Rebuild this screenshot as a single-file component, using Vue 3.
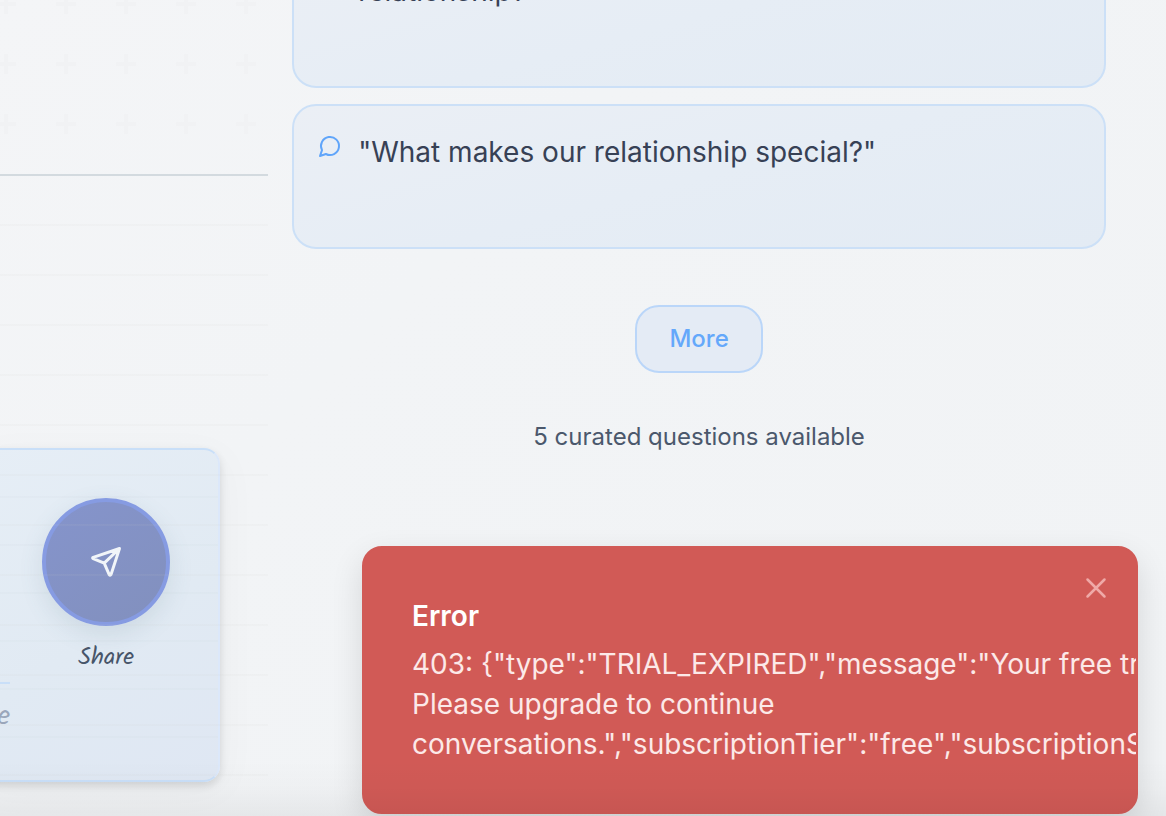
<script setup>
import { ref } from 'vue'

const questions = ['relationship?"', '"What makes our relationship special?"']
const toastOpen = ref(true)
</script>

<template>
  <div class="page">
    <section class="journal">
      <svg class="pattern" aria-hidden="true">
        <defs>
          <pattern id="plus" width="60" height="60" x="-24" y="-26" patternUnits="userSpaceOnUse">
            <path d="M28 20h4v8h8v4h-8v8h-4v-8h-8v-4h8z" fill="#f1f2f4" />
          </pattern>
        </defs>
        <rect width="100%" height="100%" fill="url(#plus)" />
      </svg>
      <div class="sheet">
        <form class="composer" @submit.prevent>
          <div class="hint">e</div>
          <div class="share">
            <button id="share" class="send" type="submit" aria-labelledby="share-label">
              <svg viewBox="0 0 32 32" fill="none" stroke="currentColor" stroke-width="3" stroke-linecap="round" stroke-linejoin="round" aria-hidden="true">
                <path d="M29.500 2.500 3.200 11.400Q2 12 3.200 12.700L14.200 17.200 19.200 28.600Q20.200 30 21 28.600ZM29 3 14.200 17.200" />
              </svg>
            </button>
            <label id="share-label" for="share">Share</label>
          </div>
        </form>
      </div>
    </section>

    <main class="prompts">
      <ul class="list">
        <li v-for="q in questions" :key="q" class="question">
          <svg class="bubble" viewBox="0 0 24 24" fill="none" stroke="currentColor" stroke-width="2" stroke-linecap="round" stroke-linejoin="round" aria-hidden="true">
            <path d="M7.900 20A9 9 0 1 0 4 16.100L2 22Z" />
          </svg>
          <p>{{ q }}</p>
        </li>
      </ul>
      <button class="more" type="button">More</button>
      <p class="count">5 curated questions available</p>
    </main>

    <div v-if="toastOpen" class="toast" role="alert">
      <h2>Error</h2>
      <p>403: {"type":"TRIAL_EXPIRED","message":"Your free trial<br />Please upgrade to continue<br />conversations.","subscriptionTier":"free","subscriptionStatus</p>
      <button class="close" type="button" aria-label="Close" @click="toastOpen = false">
        <svg viewBox="0 0 32 32" fill="none" stroke="currentColor" stroke-width="2.5" stroke-linecap="round" aria-hidden="true">
          <path d="M7.500 7.500 24.500 24.500M24.500 7.500 7.500 24.500" />
        </svg>
      </button>
    </div>
    <div class="shade"></div>
  </div>
</template>

<style>
body {
  margin: 0;
}
</style>

<style scoped>
* {
  box-sizing: border-box;
}
.page {
  position: relative;
  display: grid;
  grid-template-columns: 23% 1fr;
  height: 100vh;
  overflow: hidden;
  background: linear-gradient(135deg, #f4f5f7, #f2f4f6 35%, #f1f3f5);
  color: #374155;
  font-family: Inter, "Liberation Sans", sans-serif;
}
h2,
p,
ul {
  margin: 0;
  padding: 0;
}
button {
  font: inherit;
  cursor: pointer;
}
.journal {
  display: flex;
  flex-direction: column;
  min-width: 0;
}
.pattern {
  width: 100%;
  height: 174px;
}
.sheet {
  position: relative;
  display: flex;
  flex: 1;
  align-items: flex-end;
  padding: 0 48px 34px 0;
  border-top: 2px solid #d3dadf;
}
.sheet::after {
  content: "";
  position: absolute;
  inset: 0;
  background: repeating-linear-gradient(transparent 0 48px, rgba(200, 200, 195, 0.08) 48px 50px);
  pointer-events: none;
}
.composer {
  display: flex;
  flex: 1;
  align-items: flex-end;
  gap: 32px;
  min-height: 334px;
  margin-left: -24px;
  padding: 48px;
  padding-left: 0;
  border: 2px solid #c9dff8;
  border-right-color: #dce8fa;
  border-radius: 16px;
  background:
    repeating-linear-gradient(transparent 0 46px, rgba(190, 200, 205, 0.08) 46px 48px),
    linear-gradient(150deg, #e6eef6, #e1eaf3 55%, #dfe7f3);
  box-shadow: 0 4px 8px rgba(0, 0, 0, 0.12), 4px 8px 40px rgba(0, 0, 0, 0.03);
}
.hint {
  flex: 1;
  padding-top: 18px;
  border-top: 2px solid #c9dff8;
  color: #9aa6ba;
  font-size: 28px;
  font-family: Kalam, "Open Sans", sans-serif;
  line-height: 30px;
  text-align: right;
}
.share {
  display: flex;
  flex-direction: column;
  align-self: flex-start;
  align-items: center;
  gap: 14px;
}
.send {
  display: flex;
  align-items: center;
  justify-content: center;
  width: 128px;
  height: 128px;
  padding: 0;
  border: 4px solid #869be2;
  border-radius: 50%;
  background: linear-gradient(145deg, #8594cc, #8290bd) border-box;
  color: #f1f5f9;
  box-shadow: 0 8px 24px rgba(80, 110, 130, 0.14);
}
.send svg {
  width: 32px;
  height: 32px;
}
.share label {
  color: #475569;
  font-size: 24px;
  font-family: Kalam, Lato, sans-serif;
  line-height: 36px;
}
.prompts {
  display: flex;
  flex-direction: column;
  align-items: center;
  min-width: 0;
  padding: 0 60px 0 24px;
}
.list {
  display: flex;
  flex-direction: column;
  gap: 16px;
  width: 100%;
  margin-top: -57px;
  list-style: none;
}
.question {
  display: flex;
  gap: 16px;
  min-height: 145px;
  padding: 24px;
  border: 2px solid #cce0f7;
  border-radius: 24px;
  background: linear-gradient(165deg, #ebeff5, #e6edf5 50%, #e3ebf4);
}
.question p {
  font-size: 28px;
  line-height: 44px;
}
.bubble {
  flex: none;
  width: 24px;
  height: 24px;
  margin-top: 4px;
  color: #60a5fa;
}
.more {
  margin-top: 56px;
  padding: 16px 32px;
  border: 2px solid #bad6f9;
  border-radius: 24px;
  background: #e4ebf5;
  color: #64a8fb;
  font-size: 24px;
  font-weight: 500;
  line-height: 32px;
}
.count {
  margin-top: 48px;
  color: #4b586c;
  font-size: 24px;
  line-height: 32px;
}
.toast {
  position: absolute;
  right: 28px;
  bottom: 2px;
  width: 776px;
  max-width: calc(100% - 56px);
  padding: 48px;
  overflow: hidden;
  border: 2px solid #d15a56;
  border-radius: 20px;
  background: #d15a56;
  box-shadow: 0 12px 32px rgba(0, 0, 0, 0.12);
  color: #fff;
  font-size: 28px;
  line-height: 40px;
}
.toast h2 {
  margin-bottom: 8px;
  font-size: 28px;
  font-weight: 600;
}
.toast p {
  color: #fce9e8;
  white-space: nowrap;
}
.close {
  position: absolute;
  top: 24px;
  right: 24px;
  width: 32px;
  height: 32px;
  padding: 0;
  border: 0;
  background: none;
  color: #efa9a7;
}
.close svg {
  display: block;
}
.shade {
  position: absolute;
  inset: auto 0 0;
  height: 56px;
  background: linear-gradient(transparent, rgba(0, 0, 0, 0.015) 50%, rgba(0, 0, 0, 0.05));
  pointer-events: none;
}
</style>
